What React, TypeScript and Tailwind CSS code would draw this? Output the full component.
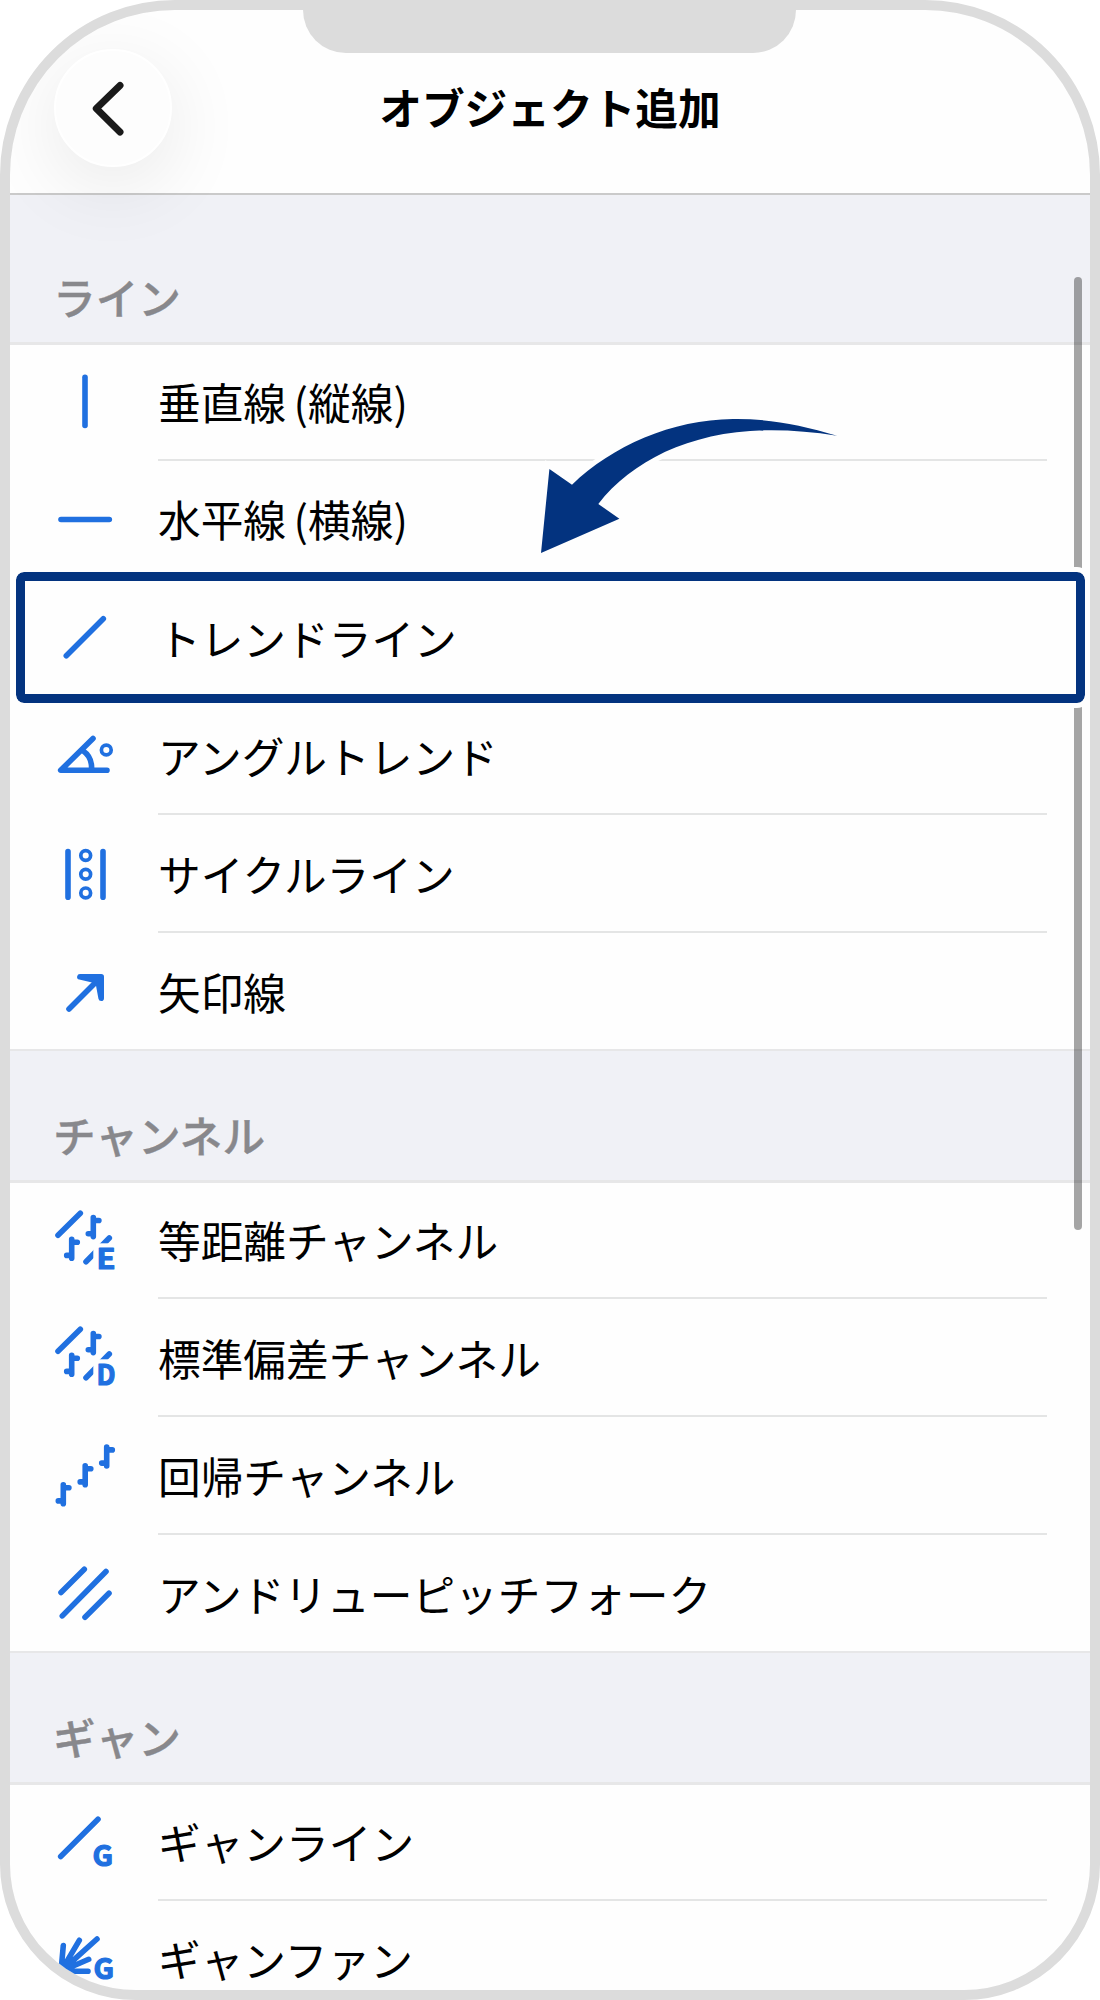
import type { ReactNode } from "react";

function Candle({ x, y }: { x: number; y: number }) {
  return (
    <path
      transform={`translate(${x} ${y})`}
      d="M0 0V19M0 2.9H5.6M0 16.1H-5"
    />
  );
}

function Letter({
  x,
  y,
  width,
  children,
}: {
  x: number;
  y: number;
  width: number;
  children: string;
}) {
  return (
    <text
      x={x}
      y={y}
      textLength={width}
      lengthAdjust="spacingAndGlyphs"
      className="fill-[#2070e0] font-['Noto_Sans_CJK_JP',sans-serif] text-[28px] font-bold"
      strokeWidth="1.2"
    >
      {children}
    </text>
  );
}

function ChannelIcon({ letter }: { letter: string }) {
  return (
    <>
      <path d="M3 24.3 25.3 2.3M31 50.7 54.3 27" />
      <path d="M38.3 32.3H60V60H38.3Z" fill="#fefefe" stroke="none" />
      <Candle x={16.7} y={28.3} />
      <Candle x={38.3} y={6.6} />
      <Letter x={41.5} y={58} width={19}>
        {letter}
      </Letter>
    </>
  );
}

const sections: {
  title: string;
  headClass: string;
  items: { label: string; icon: ReactNode }[];
}[] = [
  {
    title: "ライン",
    headClass: "h-[150px]",
    items: [
      { label: "垂直線 (縦線)", icon: <path d="M30 5.2V53.5" /> },
      { label: "水平線 (横線)", icon: <path d="M6 30.5H54.3" /> },
      { label: "トレンドライン", icon: <path d="M11.3 48.7 48.3 11.7" /> },
      {
        label: "アングルトレンド",
        icon: (
          <>
            <path d="M38 12.4 5.7 44.3H52" />
            <path d="M28.3 25Q37 31 36.6 43" />
            <circle cx="51.3" cy="24" r="4.9" strokeWidth="3.7" />
          </>
        ),
      },
      {
        label: "サイクルライン",
        icon: (
          <>
            <path d="M13 7.5V53.2M48 7.5V53.2" />
            <circle cx="30.7" cy="11.5" r="4.9" strokeWidth="3.7" />
            <circle cx="30.7" cy="30.2" r="4.9" strokeWidth="3.7" />
            <circle cx="30.7" cy="48.9" r="4.9" strokeWidth="3.7" />
          </>
        ),
      },
      {
        label: "矢印線",
        icon: (
          <>
            <path d="M14 47 43 18" />
            <path d="M24.9 14.8H46.2V36.2L43 19Z" fill="#2070e0" />
          </>
        ),
      },
    ],
  },
  {
    title: "チャンネル",
    headClass: "h-[134px] border-t-2",
    items: [
      { label: "等距離チャンネル", icon: <ChannelIcon letter="E" /> },
      { label: "標準偏差チャンネル", icon: <ChannelIcon letter="D" /> },
      {
        label: "回帰チャンネル",
        icon: (
          <>
            <Candle x={8.3} y={38.8} />
            <Candle x={30.2} y={19.8} />
            <Candle x={51.7} y={1} />
          </>
        ),
      },
      {
        label: "アンドリューピッチフォーク",
        icon: (
          <path d="M6 28.5 29.3 5.2M7.3 51.9 51 7.5M30 53.2 54 29.2" />
        ),
      },
    ],
  },
  {
    title: "ギャン",
    headClass: "h-[134px] border-t-2",
    items: [
      {
        label: "ギャンライン",
        icon: (
          <>
            <path d="M5.7 44.5 43 7.2" />
            <Letter x={37.5} y={54.4} width={20.5}>
              G
            </Letter>
          </>
        ),
      },
      {
        label: "ギャンファン",
        icon: (
          <>
            <path d="M6 42.3 8.3 16.5M6 42.3 24.3 11.3M6 42.3 42 10M6 42.3 33.7 30.3M6 42.3H33" />
            <Letter x={38.5} y={50.2} width={20.5}>
              G
            </Letter>
          </>
        ),
      },
    ],
  },
];

function Row({ label, icon }: { label: string; icon: ReactNode }) {
  return (
    <li className="group flex h-[118.2px] shrink-0 pl-[45px] first:h-[115.6px]">
      <div className="flex w-[103px] items-center pb-px">
        <svg
          viewBox="0 0 60 60"
          className="size-[60px] overflow-visible"
          fill="none"
          stroke="#2070e0"
          strokeWidth="5.6"
          strokeLinecap="round"
          strokeLinejoin="round"
        >
          {icon}
        </svg>
      </div>
      <div className="flex w-[889px] items-center border-b-2 border-[#e4e5e5] text-black [word-spacing:-2px] group-first:pb-px group-last:border-transparent">
        {label}
      </div>
    </li>
  );
}

export default function App() {
  return (
    <div className="relative flex h-[2000px] w-[1100px] flex-col overflow-hidden rounded-t-[175px] rounded-b-[136px] border-10 border-[#dcdcdc] bg-[#fefefe] font-['Noto_Sans_CJK_JP',sans-serif] text-[42.7px] leading-none">
      <div className="absolute top-0 left-[293px] z-20 h-[43px] w-[493px] rounded-b-[43px] bg-[#dcdcdc]" />
      <header className="relative z-10 flex h-[185px] shrink-0 items-center justify-center border-b-2 border-[#cacaca] pt-2.5">
        <button className="absolute top-[39px] left-[44px] flex size-[118px] items-center justify-center rounded-full border-2 border-white bg-[#fdfdfd] shadow-[0_18px_80px_rgba(0,0,0,0.09)]">
          <svg
            viewBox="0 0 118 118"
            className="size-[118px] shrink-0"
            fill="none"
            stroke="#1a1a1a"
            strokeWidth="7"
            strokeLinecap="round"
            strokeLinejoin="round"
          >
            <path d="M66 36.5 42.3 59.5 66 83" />
          </svg>
        </button>
        <h1 className="font-bold">オブジェクト追加</h1>
      </header>

      {sections.map((section) => (
        <section key={section.title} className="shrink-0">
          <h2
            className={`${section.headClass} relative flex items-end border-b-3 border-[#e7e7e8] bg-[#f0f1f6] pb-[24.5px] pl-[43px] font-medium text-[#88888c] [-webkit-text-stroke:0.4px]`}
          >
            {section.title}
          </h2>
          <ul className="-mb-[2.3px]">
            {section.items.map((item) => (
              <Row key={item.label} label={item.label} icon={item.icon} />
            ))}
          </ul>
        </section>
      ))}

      {/* scroll indicator */}
      <div className="absolute top-[267px] right-[8px] h-[953px] w-2 rounded-full bg-black/35" />

      {/* highlighted row frame */}
      <div className="absolute top-[561.5px] left-[5.5px] h-[131px] w-[1069px] rounded-lg border-9 border-[#03337f] outline-5 outline-[#fefefe]">
        <div className="absolute top-0 right-0 h-full w-4 bg-[#fefefe]" />
        <div className="absolute right-0 bottom-0 left-36 h-4 bg-[#fefefe]" />
      </div>

      <svg
        viewBox="530 405 320 160"
        className="absolute top-[395px] left-[520px] h-40 w-80"
      >
        <path
          d="M837 435.7C800 424.5 766 418.5 733 419C672 419.5 612 446 572 484.7L549.4 469L541 553L619.4 518.7L598.3 504C632 461 690 431.5 767 430.3C790 430 813 432 837 435.7Z"
          fill="#03337f"
          stroke="#fefefe"
          strokeWidth="10"
          paintOrder="stroke"
        />
      </svg>
    </div>
  );
}
